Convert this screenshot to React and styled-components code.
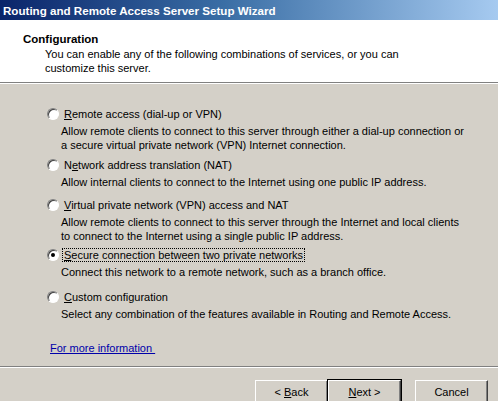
import React, { useState } from 'react'
import styled, { createGlobalStyle } from 'styled-components'

const GlobalStyle = createGlobalStyle`
  html, body { margin: 0; padding: 0; }
  body {
    font-family: "Liberation Sans", Arial, sans-serif;
    font-size: 11px;
    background: #d4d0c8;
  }
`

const Window = styled.div`
  width: 498px;
  height: 401px;
  display: flex;
  flex-direction: column;
  background: #d4d0c8;
  overflow: hidden;
  color: #000;
`

const TitleBar = styled.div`
  height: 20px;
  flex-shrink: 0;
  display: flex;
  align-items: center;
  padding-left: 3px;
  background: linear-gradient(to right, #0a246a 0%, #3a6ea5 45%, #a6caf0 100%);
  color: #fff;
  font-weight: bold;
  font-size: 11.6px;
`

const Header = styled.div`
  height: 63px;
  flex-shrink: 0;
  background: #fff;
  padding: 13px 0 0 23px;
  box-sizing: border-box;
  border-bottom: 1px solid #808080;
  box-shadow: 0 1px 0 #fff;
`

const HeaderTitle = styled.div`
  font-weight: bold;
  font-size: 11.5px;
  margin-bottom: 2px;
`

const HeaderText = styled.div`
  padding-left: 22px;
  line-height: 14px;
  width: 400px;
`

const Body = styled.div`
  flex: 1;
  padding: 23px 0 0 47px;
  display: flex;
  flex-direction: column;
`

const Option = styled.div`
  display: flex;
  flex-direction: column;
  margin-bottom: ${p => p.$gap}px;
`

const OptionRow = styled.label`
  display: flex;
  align-items: center;
  height: 16px;
  cursor: default;
`

const Radio = styled.span`
  width: 12px;
  height: 12px;
  border-radius: 50%;
  box-sizing: border-box;
  background: #fff;
  border: 1px solid;
  border-color: #808080 #fff #fff #808080;
  box-shadow: inset 1px 1px 0 #404040;
  display: flex;
  align-items: center;
  justify-content: center;
  margin-right: 4px;
  flex-shrink: 0;
  &::after {
    content: '';
    width: 4px;
    height: 4px;
    border-radius: 50%;
    background: ${p => (p.$checked ? '#000' : 'transparent')};
  }
`

const OptionLabel = styled.span`
  padding: 0 1px;
  outline: ${p => (p.$focused ? '1px dotted #000' : 'none')};
`

const OptionDesc = styled.div`
  padding-left: 14px;
  line-height: 14px;
  width: 410px;
  margin-top: 2px;
`

const Link = styled.a`
  color: #0000aa;
  text-decoration: underline;
  margin-top: 21px;
  margin-left: 3px;
  font-size: 11px;
`

const Divider = styled.div`
  height: 0;
  border-top: 1px solid #808080;
  border-bottom: 1px solid #fff;
  flex-shrink: 0;
`

const Footer = styled.div`
  height: 33px;
  flex-shrink: 0;
  display: flex;
  padding: 12px 0 0 255px;
  box-sizing: border-box;
`

const Button = styled.button`
  width: 73px;
  height: 23px;
  font-family: "Liberation Sans", Arial, sans-serif;
  font-size: 11px;
  background: #d4d0c8;
  color: #000;
  border: 1px solid;
  border-color: #fff #404040 #404040 #fff;
  box-shadow: inset -1px -1px 0 #808080;
  outline: ${p => (p.$default ? '1px solid #000' : 'none')};
  margin-right: ${p => p.$mr || 0}px;
  padding: 0;
  u { text-decoration: underline; }
`

const options = [
  { key: 'R', label: 'emote access (dial-up or VPN)', desc: 'Allow remote clients to connect to this server through either a dial-up connection or a secure virtual private network (VPN) Internet connection.', gap: 5 },
  { pre: 'N', key: 'e', label: 'twork address translation (NAT)', desc: 'Allow internal clients to connect to the Internet using one public IP address.', gap: 8 },
  { key: 'V', label: 'irtual private network (VPN) access and NAT', desc: 'Allow remote clients to connect to this server through the Internet and local clients to connect to the Internet using a single public IP address.', gap: 4 },
  { key: 'S', label: 'ecure connection between two private networks', desc: 'Connect this network to a remote network, such as a branch office.', gap: 10 },
  { key: 'C', label: 'ustom configuration', desc: 'Select any combination of the features available in Routing and Remote Access.', gap: 0 },
]

export default function App() {
  const [selected, setSelected] = useState(3)
  return (
    <>
      <GlobalStyle />
      <Window>
        <TitleBar>Routing and Remote Access Server Setup Wizard</TitleBar>
        <Header>
          <HeaderTitle>Configuration</HeaderTitle>
          <HeaderText>You can enable any of the following combinations of services, or you can customize this server.</HeaderText>
        </Header>
        <Body>
          {options.map((o, i) => (
            <Option key={i} $gap={o.gap}>
              <OptionRow onClick={() => setSelected(i)}>
                <Radio $checked={selected === i} />
                <OptionLabel $focused={selected === i}>
                  {o.pre}<u>{o.key}</u>{o.label}
                </OptionLabel>
              </OptionRow>
              <OptionDesc>{o.desc}</OptionDesc>
            </Option>
          ))}
          <Link href="#">For more information&nbsp;</Link>
        </Body>
        <Divider />
        <Footer>
          <Button>&lt; <u>B</u>ack</Button>
          <Button $default $mr={14}><u>N</u>ext &gt;</Button>
          <Button>Cancel</Button>
        </Footer>
      </Window>
    </>
  )
}
